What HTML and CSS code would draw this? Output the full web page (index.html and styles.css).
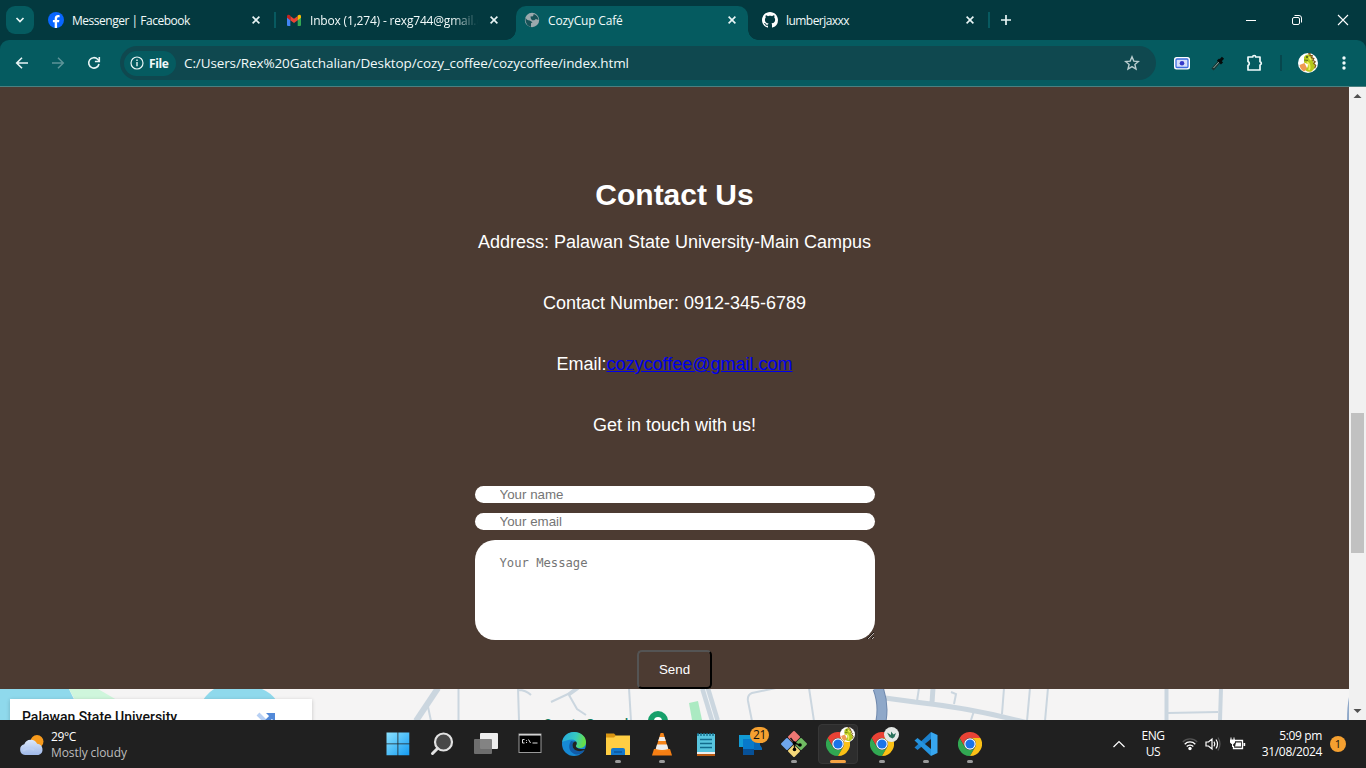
FILE: index.html
```html
<!DOCTYPE html>
<html lang="en">
<head>
<meta charset="utf-8">
<title>CozyCup Café</title>
<link rel="stylesheet" href="styles.css">
</head>
<body>
<svg class="defs" width="0" height="0" aria-hidden="true">
  <symbol id="close" viewBox="0 0 16 16"><path d="M4.600 4.600l6.800 6.800M11.400 4.600l-6.800 6.800" fill="none" stroke="#e8f5f5" stroke-width="1.600"/></symbol>
  <symbol id="chrome" viewBox="0 0 24 24">
    <path d="M1.6 6L6.8 15A6 6 0 0 1 12 6H22.4A12 12 0 0 0 1.6 6Z" fill="#e94235"/>
    <path d="M1.6 6A12 12 0 0 0 12 24L17.2 15A6 6 0 0 1 6.8 15Z" fill="#31a852"/>
    <path d="M22.4 6H12A6 6 0 0 1 17.2 15L12 24A12 12 0 0 0 22.4 6Z" fill="#fbc116"/>
    <circle cx="12" cy="12" r="5.8" fill="#fff"/><circle cx="12" cy="12" r="4.6" fill="#1a73e8"/>
  </symbol>
  <symbol id="dragon" viewBox="0 0 20 20">
    <circle cx="10" cy="10" r="10" fill="#fff"/>
    <path d="M1.5 12l5-2 3 6-3.5 2.6A9 9 0 0 1 1.500 12Z" fill="#ef9a52"/>
    <path d="M6 4q2.500-3.500 6-2l2 2.500 1 4 2 3-.5 4-3 3q-4 .8-6-1.300 3-3 2.500-6l-4-1.700Z" fill="#b5c81a"/>
    <path d="M9 9q4 3 2 8M11 4l2 3" stroke="#efee5c" stroke-width="1.800" fill="none"/>
    <path d="M10 1l2-.6v2l2.300.4-.8 1.800 2.300 1-1 1.700 2.400 1.500-1.500 1.500 2 2-1 3" fill="none" stroke="#7d5714" stroke-width="1.200"/>
    <circle cx="9" cy="4" r="1" fill="#40531b"/><path d="M6 7l4 .5" stroke="#6d7418"/>
  </symbol>
</svg>

<header class="tabstrip">
  <button class="tab-search"><svg width="12" height="12" viewBox="0 0 12 12"><path d="M2.500 4l3.500 3.500L9.500 4" fill="none" stroke="#e8f5f5" stroke-width="1.700"/></svg></button>
  <div class="tab">
    <svg width="16" height="16" viewBox="0 0 16 16"><circle cx="8" cy="8" r="8" fill="#0866ff"/><path d="M6.700 16V10.300H4.900V7.900h1.800V6.700c0-2.500 1.100-3.700 3.500-3.700.5 0 1 .1 1.400.2v2.100h-1c-1.100 0-1.500.5-1.500 1.600v1h2.300l-.4 2.400H9.100V16Z" fill="#fff"/></svg>
    <span class="tab-title t1">Messenger | Facebook</span>
    <svg class="x" width="16" height="16"><use href="#close"/></svg><i class="sep"></i>
  </div>
  <div class="tab">
    <svg width="16" height="16" viewBox="0 0 16 16"><path d="M1 4.500l3.300 2.400V14H2a1 1 0 0 1-1-1Z" fill="#4285f4"/><path d="M15 4.500l-3.300 2.400V14H14a1 1 0 0 0 1-1Z" fill="#34a853"/><path d="M4.300 4L8 6.800 11.700 4v4.200L8 11 4.300 8.200Z" fill="#ea4335"/><path d="M1 4.300C1 2.500 2.700 2 4.300 3.600v4.700L1 5.800Z" fill="#c5221f"/><path d="M15 4.300c0-1.800-1.700-2.300-3.300-.7v4.700L15 5.800Z" fill="#fbbc04"/></svg>
    <span class="tab-title t2 fade">Inbox (1,274) - rexg744@gmail.com</span>
    <svg class="x" width="16" height="16"><use href="#close"/></svg>
  </div>
  <div class="tab active">
    <svg width="16" height="16" viewBox="0 0 16 16"><circle cx="8" cy="8" r="7.200" fill="#9ba9ad"/><path d="M1.500 6Q3 8.800 5.800 8.400L8.500 10.200 7 11.300v3.600Q1.800 13.500 1.500 8ZM6.500 4.600L9 4.200l.8-2.300Q14 3.500 14.500 8l-2.600-1-1.600 1.200L8 8.300 6.800 6.500Z" fill="#175257"/></svg>
    <span class="tab-title t3">CozyCup Café</span>
    <svg class="x" width="16" height="16"><use href="#close"/></svg>
  </div>
  <div class="tab">
    <svg width="16" height="16" viewBox="0 0 16 16"><path fill="#fff" d="M8 0C3.580 0 0 3.580 0 8c0 3.540 2.290 6.530 5.470 7.590.4.070.55-.17.55-.38 0-.19-.01-.82-.01-1.490-2.010.37-2.530-.49-2.690-.94-.09-.23-.48-.94-.82-1.130-.28-.15-.68-.52-.01-.53.63-.01 1.080.58 1.230.82.72 1.210 1.870.87 2.330.66.070-.52.28-.87.51-1.070-1.780-.2-3.640-.89-3.640-3.950 0-.87.31-1.590.82-2.150-.08-.2-.36-1.020.08-2.120 0 0 .67-.21 2.200.82.64-.18 1.320-.27 2-.27s1.360.09 2 .27c1.530-1.040 2.200-.82 2.200-.82.44 1.100.16 1.920.08 2.120.51.56.82 1.270.82 2.150 0 3.070-1.870 3.750-3.650 3.950.29.25.54.73.54 1.480 0 1.070-.01 1.930-.01 2.200 0 .21.15.46.55.38A8.010 8.010 0 0 0 16 8c0-4.420-3.580-8-8-8Z"/></svg>
    <span class="tab-title t4">lumberjaxxx</span>
    <svg class="x" width="16" height="16"><use href="#close"/></svg><i class="sep"></i>
  </div>
  <svg class="newtab" width="14" height="14" viewBox="0 0 14 14"><path d="M7 2v10M2 7h10" stroke="#e8f5f5" stroke-width="1.700"/></svg>
  <div class="winctl">
    <svg width="46" height="40" viewBox="0 0 46 40"><path d="M18 20.500h10" stroke="#fff"/></svg>
    <svg width="46" height="40" viewBox="0 0 46 40"><rect x="18.500" y="17.500" width="7" height="7" rx="1.500" fill="none" stroke="#fff"/><path d="M20.500 15.500h4.500q2.500 0 2.500 2.500v4.500" fill="none" stroke="#fff"/></svg>
    <svg width="46" height="40" viewBox="0 0 46 40"><path d="M18 15l10 10M28 15l-10 10" stroke="#fff" stroke-width="1.100"/></svg>
  </div>
</header>

<div class="toolbar-back"><div class="toolbar">
  <div class="nav">
    <svg width="16" height="16" viewBox="0 0 16 16"><path d="M14 8H3M8 2.700L2.700 8 8 13.300" fill="none" stroke="#e8f5f5" stroke-width="1.600"/></svg>
    <svg width="16" height="16" viewBox="0 0 16 16"><path d="M2 8h11M8 2.700L13.300 8 8 13.300" fill="none" stroke="#5d9498" stroke-width="1.500"/></svg>
    <svg width="16" height="16" viewBox="0 0 16 16"><path d="M13 9A5.200 5.200 0 1 1 11.700 4.300L13.300 6" fill="none" stroke="#e8f5f5" stroke-width="1.600"/><path d="M13.300 2v4.500H8.900" fill="none" stroke="#e8f5f5" stroke-width="1.600"/></svg>
  </div>
  <div class="omnibox">
    <span class="chip"><svg width="14" height="14" viewBox="0 0 14 14"><circle cx="7" cy="7" r="6" fill="none" stroke="#e8f5f5" stroke-width="1.200"/><path d="M7 6v4.200M7 3.500v1.400" stroke="#e8f5f5" stroke-width="1.400"/></svg><b>File</b></span>
    <span class="url">C:/Users/Rex%20Gatchalian/Desktop/cozy_coffee/cozycoffee/index.html</span>
    <svg class="star" width="16" height="16" viewBox="0 0 16 16"><path d="M8 1.800l1.800 4.300 4.600.4-3.500 3 1.100 4.600-4-2.500-4 2.500 1.100-4.600-3.500-3 4.600-.4Z" fill="none" stroke="#b9cdcf" stroke-width="1.400"/></svg>
  </div>
  <div class="ext">
    <svg width="18" height="18" viewBox="0 0 18 18"><rect x="1" y="3" width="16" height="12.500" rx="2.500" fill="#fff"/><rect x="3" y="5" width="12" height="8.500" rx="1" fill="#d5defb" stroke="#3e6de0" stroke-width="1.300"/><circle cx="9" cy="9.200" r="2.300" fill="#3438c8"/></svg>
    <svg width="16" height="18" viewBox="0 0 16 18"><path d="M2.500 15.500L9 8" stroke="#1a3632" stroke-width="3"/><path d="M3.500 14L9 8" stroke="#8fa9a4" stroke-width="1"/><path d="M8 5.500l4 4M9.500 7.500L13 3.800" stroke="#050b0b" stroke-width="3"/></svg>
    <svg class="puzzle" width="18" height="18" viewBox="0 0 18 18"><path d="M2 3h4.700a1.500 1.500 0 0 1 3 0H14v4.700a1.700 1.700 0 0 1 0 3.300V16H2v-4.500a2.200 2.200 0 0 0 0-4Z" fill="none" stroke="#f0fbfb" stroke-width="1.700" stroke-linejoin="round"/></svg>
    <i class="bar"></i>
    <svg class="avatar" width="20" height="20"><use href="#dragon"/></svg>
    <svg class="dots" width="6" height="18" viewBox="0 0 6 18"><circle cx="3" cy="4" r="1.700" fill="#f0fbfb"/><circle cx="3" cy="9" r="1.700" fill="#f0fbfb"/><circle cx="3" cy="14" r="1.700" fill="#f0fbfb"/></svg>
  </div>
</div></div>

<div class="viewport">
  <main class="page">
    <section class="contact">
      <h1>Contact Us</h1>
      <p>Address: Palawan State University-Main Campus</p>
      <p>Contact Number: 0912-345-6789</p>
      <p>Email:<a href="mailto:cozycoffee@gmail.com">cozycoffee@gmail.com</a></p>
      <p>Get in touch with us!</p>
      <form class="form">
        <input type="text" placeholder="Your name">
        <input type="email" placeholder="Your email">
        <textarea placeholder="Your Message"></textarea>
        <button type="button" class="send">Send</button>
      </form>
    </section>
    <section class="map">
      <svg width="1349" height="31" viewBox="0 689 1349 31">
        <path d="M0 689H69L84 720H0Z" fill="#8fd9ec"/><path d="M69 689H98L117 700H75Z" fill="#cff6dc"/>
        <path d="M200 705Q206 694 214 689H262Q270 692 277 701V705Z" fill="#8fd9ec"/>
        <g fill="none" stroke="#cbd6df" stroke-width="2">
          <path d="M438 688L416 721" stroke-width="6"/><path d="M427 702l4 19M458.500 688v32M518 688l1 32M518 690q8 0 13 5M551 702l17-8M569 695l8 14 9 6M629 688l2 33"/>
          <path d="M568 695l11-8" stroke-width="4"/>
          <path d="M705 688l10 33" stroke-width="10"/><path d="M705 688l10 33" stroke="#f0f3f5" stroke-width="1"/>
          <path d="M752 721l-4-20q-1-6 4-8l24-5M809 688l5 33M919 688l-2 13M951 692l5 2-2 10M1004 688l-2 26M974 711l-3 9M1030 688l-3 33M1048 688l-3 33M1168 713l50-1"/>
          <path d="M933 688l-1 15M885 698l30 4q55 6 105 19l20 5" stroke-width="5"/>
          <path d="M1166.500 688v32M1221 688l-1 32" stroke-width="4"/>
          <path d="M878 688q6 16 3 33" stroke="#7089ad" stroke-width="11"/><path d="M878 688q6 16 3 33" stroke="#8fa8c9" stroke-width="9"/>
          <path d="M1350 697q-2 10-2 23" stroke="#8fa8c9"/>
        </g>
        <path d="M689 703l9-2 4 19h-10Z" fill="#abeac2"/>
        <circle cx="658" cy="721" r="10" fill="#17a06b"/><circle cx="658" cy="721" r="4" fill="#fff"/>
      </svg>
      <span class="poi">Sports Ground</span>
      <div class="mapcard"><span>Palawan State University</span><svg width="20" height="10" viewBox="0 0 20 10"><path d="M2 2l7 7" stroke="#b7d0f4" stroke-width="4"/><path d="M8 12l7-7" stroke="#5289d8" stroke-width="4"/><path d="M10 1h9v9Z" fill="#5289d8"/></svg></div>
    </section>
  </main>
  <aside class="scroll">
    <svg width="17" height="17" viewBox="0 0 17 17"><path d="M4.500 11h8L8.500 7Z" fill="#505050"/></svg>
    <div class="thumb"></div>
    <svg width="17" height="17" viewBox="0 0 17 17"><path d="M4.500 6h8l-4 4Z" fill="#505050"/></svg>
  </aside>
</div>

<footer class="taskbar">
  <div class="weather">
    <svg width="26" height="24" viewBox="0 0 26 24"><defs><linearGradient id="cl" x2="0" y2="1"><stop stop-color="#dbe8fb"/><stop offset="1" stop-color="#9fb8e8"/></linearGradient></defs><circle cx="18" cy="7.500" r="6.500" fill="#f79a1c"/><path d="M6 21a5.500 5.500 0 0 1-.7-10.800 7 7 0 0 1 12.800-.5 5.800 5.800 0 0 1 1.400 11.300Z" fill="url(#cl)"/><path d="M4 17q6-5 11-1" stroke="#bccff2" stroke-width="2" fill="none"/></svg>
    <div><div class="temp">29°C</div><div class="cond">Mostly cloudy</div></div>
  </div>
  <div class="apps">
    <div class="app"><svg width="24" height="24" viewBox="0 0 24 24"><defs><linearGradient id="win" x2="1" y2="1"><stop stop-color="#8be2ff"/><stop offset="1" stop-color="#149bf1"/></linearGradient></defs><path d="M.5.500h11v11H.5zM12.300.500h11v11h-11zM.5 12.300h11v11H.5zM12.300 12.300h11v11h-11z" fill="url(#win)"/></svg></div>
    <div class="app"><svg width="24" height="24" viewBox="0 0 24 24"><circle cx="13.500" cy="10" r="8.500" fill="#484848" stroke="#e2e2e2" stroke-width="2.200"/><path d="M7.500 16.500l-5 5" stroke="#e2e2e2" stroke-width="3" stroke-linecap="round"/></svg></div>
    <div class="app"><svg width="26" height="24" viewBox="0 0 26 24"><rect x="7" y="1" width="18" height="16" rx="1" fill="#eee"/><rect x="1" y="7" width="18" height="15" rx="1" fill="#777" opacity=".9"/></svg></div>
    <div class="app"><svg width="24" height="24" viewBox="0 0 24 24"><rect x="1" y="2" width="22" height="18.500" fill="#000" stroke="#9a9a9a"/><path d="M1 2.800h22" stroke="#d8d8d8" stroke-width="1.500"/><path d="M6.500 7.500h-2v3.500h2M8.500 8v.8M8.500 10v1M10.500 7.500l2 3.500M14.500 11h5" stroke="#ddd" fill="none"/></svg></div>
    <div class="app"><svg width="24" height="24" viewBox="0 0 24 24"><defs><linearGradient id="ed" x2="1" y2=".2"><stop stop-color="#25a8df"/><stop offset=".6" stop-color="#36c9c0"/><stop offset="1" stop-color="#66df49"/></linearGradient></defs><circle cx="12" cy="12" r="12" fill="#1689d4"/><path d="M.2 10C1 4 6 0 12 0c7 0 12 4.500 12 10 0 4-3 6-6.500 6-2.500 0-4.500-1-3.500-2.500 1-1.700 1-6-4-6C6 7.500 2 9 .2 10Z" fill="url(#ed)"/><path d="M9 9c-4 6-1 12 5 13.500 4 .6 7-2 8.500-4.500-5 2.500-12 1-12-5 0-2 .8-3 1.500-3.500Z" fill="#125ba8"/><path d="M14 13.500c1-1.200 1-2.500.3-3.700C12 8.500 10.500 11 10.500 13c0 6 7 7.500 12 5l1.500-1.500C19 18 13 16 14 13.500Z" fill="#222"/></svg></div>
    <div class="app run"><svg width="24" height="24" viewBox="0 0 24 24"><path d="M0 1.500h8l2 2v3H0Z" fill="#d99512"/><path d="M0 5.500h8l2-2h14V23H0Z" fill="#ffce43"/><path d="M5 23v-5q0-2 2-2h10q2 0 2 2v5Z" fill="#1478cb"/><path d="M8 20h8" stroke="#0d569b" stroke-width="1.500"/></svg></div>
    <div class="app run"><svg width="22" height="24" viewBox="0 0 22 24"><path d="M3 17h16l2 6.500H1Z" fill="#f57e13"/><path d="M9.600 1h2.800l5.100 17q-6.500 4-13 0Z" fill="#f68418"/><path d="M8.500 5h5l1.300 4H7.200ZM6 12.500h10l1.300 4.500q-6.300 2-12.600 0Z" fill="#eee"/></svg></div>
    <div class="app"><svg width="20" height="26" viewBox="0 0 20 26"><rect x="1" y="3" width="18" height="19" fill="#58c5df"/><path d="M2 2v3M5 2v3M8 2v3M11 2v3M14 2v3M17 2v3" stroke="#167391" stroke-width="1.500"/><path d="M4 8.500h12M4 12.500h12M4 16.500h12" stroke="#126b8d" stroke-width="1.500"/><rect x="1" y="21" width="18" height="2" fill="#eee"/><rect x="1" y="23" width="18" height="2" fill="#bb5b13"/></svg></div>
    <div class="app"><svg width="24" height="24" viewBox="0 0 24 24"><path d="M12 5h10v8l2 3v2h-9Z" fill="#0767b7"/><path d="M1 3h12v12H1z" fill="#129bd5"/><path d="M5 7h11v15H5z" fill="#0879ca"/><path d="M5 17h11v6H5Z" fill="#075198"/></svg><span class="count">21</span></div>
    <div class="app run"><svg width="26" height="26" viewBox="0 0 26 26"><rect x="8.500" y="1.500" width="9" height="9" rx="1" transform="rotate(45 13 6)" fill="#ee7774"/><rect x="1.500" y="8.500" width="9" height="9" rx="1" transform="rotate(45 6 13)" fill="#6ea6ed"/><rect x="15.500" y="8.500" width="9" height="9" rx="1" transform="rotate(45 20 13)" fill="#70bb62"/><rect x="8.500" y="15.500" width="9" height="9" rx="1" transform="rotate(45 13 20)" fill="#f5d879"/><path d="M9.500 7l4 5v7M14 12l5 2.500" stroke="#171717" stroke-width="1.500" fill="none"/><circle cx="13.500" cy="12" r="1.800"/><circle cx="13.500" cy="18.500" r="1.800"/><circle cx="19" cy="14" r="1.800"/></svg></div>
    <div class="app run current"><svg width="24" height="24"><use href="#chrome"/></svg><svg class="mini" width="15" height="15" viewBox="0 0 15 15"><use href="#dragon" width="15" height="15"/></svg></div>
    <div class="app run"><svg width="24" height="24"><use href="#chrome"/></svg><svg class="mini" width="15" height="15" viewBox="0 0 15 15"><circle cx="7.500" cy="7.500" r="7.500" fill="#e4e8e6"/><path d="M3 5.500l4 2.500V4.500l2.500 3L12 6l-1.500 4-2 1.500-3-1.500Z" fill="#28715b"/></svg></div>
    <div class="app run"><svg width="24" height="24" viewBox="0 0 24 24"><path d="M17 0L23.500 3v18L17 24Z" fill="#37a6ef"/><path d="M17 0v7L3.500 18 .5 15.500Z" fill="#1b80cc"/><path d="M17 24v-7L3.500 6 .5 8.500Z" fill="#2594df"/></svg></div>
    <div class="app run"><svg width="24" height="24"><use href="#chrome"/></svg></div>
  </div>
  <div class="tray">
    <svg class="chev" width="14" height="10" viewBox="0 0 14 10"><path d="M1.500 8L7 2.500 12.500 8" fill="none" stroke="#fff" stroke-width="1.200"/></svg>
    <div class="lang">ENG<br>US</div>
    <div class="status">
      <svg width="16" height="16" viewBox="0 0 16 16"><g fill="none" stroke="#fff" stroke-width="1.300"><path d="M.8 6a10 10 0 0 1 14.400 0" stroke="#555"/><path d="M2.700 8.200a7.400 7.400 0 0 1 10.600 0M4.700 10.500a4.600 4.600 0 0 1 6.600 0"/></g><circle cx="8" cy="12.500" r="1.700" fill="#fff"/></svg>
      <svg width="17" height="16" viewBox="0 0 17 16"><g fill="none" stroke="#fff" stroke-width="1.200"><path d="M1 6h2.500l3.500-3v10l-3.500-3H1ZM9 5.700q1.500 2.300 0 4.600M11 3.500q3 4.500 0 9"/><path d="M13 1.500q4 6.500 0 13" stroke="#555"/></g></svg>
      <svg width="17" height="14" viewBox="0 0 17 14"><path d="M5 3.500h8.500v8h-9V9" fill="none" stroke="#fff" stroke-width="1.300"/><path d="M7 5.500h5v4H6Z" fill="#fff"/><path d="M14.500 6h1.700v3h-1.700zM1 2.500h5v3L4.500 7h-2L1 5.500ZM1.500.5h1v2h-1zM4.500.5h1v2h-1zM3 7h1.200v3H3z" fill="#fff"/></svg>
    </div>
    <div class="clock">5:09 pm<br>31/08/2024</div>
    <span class="notif">1</span>
  </div>
</footer>
</body>
</html>
```
FILE: styles.css
```css
* { box-sizing: border-box; }
body { margin: 0; width: 1366px; height: 768px; overflow: hidden; display: flex; flex-direction: column; font-family: "Open Sans", "Noto Sans", sans-serif; font-size: 12px; }
.defs { position: absolute; }
svg { display: block; flex: none; }

.tabstrip { height: 40px; background: #03393f; display: flex; align-items: center; padding-left: 6px; }
.tab-search { width: 28px; height: 28px; border: 0; padding: 0; border-radius: 9px; background: #055b60; display: flex; align-items: center; justify-content: center; margin-right: 6px; }
.tab { position: relative; width: 238px; height: 34px; margin-top: 6px; padding: 0 14px 6px 8px; display: flex; align-items: center; gap: 8px; color: #f2fafa; }
.tab > svg, .tab-title { position: relative; z-index: 1; }
.tab-title { flex: 1; white-space: nowrap; overflow: hidden; line-height: 18px; padding-top: 1px; }
.fade { -webkit-mask-image: linear-gradient(90deg, #000 142px, transparent 168px); }
.t1 { letter-spacing: -.48px; }
.t2, .t3 { letter-spacing: -.18px; }
.t4 { letter-spacing: -.55px; }
.sep { position: absolute; left: 234px; top: 6px; width: 2px; height: 16px; background: #075a60; }
.tab.active::before { content: ""; position: absolute; inset: 0 6px 0 0; border-radius: 10px 10px 0 0; background: #055b60; }
.tab.active::after { content: ""; position: absolute; left: -10px; right: -4px; bottom: 0; height: 10px; background: radial-gradient(circle at 0 0, transparent 9.500px, #055b60 10px) left / 10px 10px no-repeat, radial-gradient(circle at 100% 0, transparent 9.500px, #055b60 10px) right / 10px 10px no-repeat; }
.newtab { margin-left: 7px; }
.winctl { display: flex; margin-left: auto; }

.toolbar-back { background: #03393f; }
.toolbar { height: 47px; background: #055b60; border-radius: 9px 9px 0 0; border-bottom: 1px solid #4a8080; display: flex; align-items: center; padding: 0 19px 0 14px; }
.nav { display: flex; gap: 20px; }
.omnibox { margin-left: 18px; width: 1036px; height: 34px; border-radius: 17px; background: #0f484f; display: flex; align-items: center; padding: 0 16px 0 4px; color: #f2fafa; }
.chip { height: 25px; width: 52px; border-radius: 13px; background: #055b60; display: flex; align-items: center; gap: 5px; padding-left: 6px; letter-spacing: -.4px; }
.url { flex: 1; font-size: 13.500px; margin-left: 8px; letter-spacing: -.11px; white-space: nowrap; }
.ext { display: flex; align-items: center; margin-left: 17px; gap: 19px; }
.puzzle { margin-left: 1px; }
.bar { width: 2px; height: 16px; background: #07474d; margin-left: -3px; }
.avatar { margin-left: -3px; }
.dots { margin-left: 4px; }

.viewport { height: 633px; display: flex; }
.page { width: 1349px; display: flex; flex-direction: column; font-family: "Liberation Sans", Arial, sans-serif; }
.contact { height: 602px; background: #4c3b32; color: #fff; text-align: center; padding-top: 91px; }
.contact h1 { margin: 0; font-size: 30px; line-height: 34px; }
.contact p { margin: 0; font-size: 18px; line-height: 61px; }
.contact a { color: #00e; }
.form { width: 400px; margin: 30px auto 0; display: flex; flex-direction: column; align-items: center; gap: 10px; }
.form input, .form textarea { width: 400px; border: 0; margin: 0; background: #fff; }
.form input { height: 17px; padding: 0 25px; border-radius: 10px; font: 13.333px "Liberation Sans", Arial, sans-serif; }
.form textarea { height: 100px; padding: 15px 25px; border-radius: 20px; font: 12.200px/16px "DejaVu Sans Mono", monospace; }
.form ::placeholder { color: #757575; }
.send { width: 75px; height: 39px; border: 2px outset #000; border-radius: 5px; background: transparent; color: #fff; font: 13.333px "Liberation Sans", Arial, sans-serif; }
.map { position: relative; height: 31px; overflow: hidden; background: #f5f4f4; }
.poi { position: absolute; left: 544px; top: 26px; color: #147d5c; font: 500 13px/18px Roboto, sans-serif; }
.mapcard { position: absolute; left: 10px; top: 10px; width: 302px; height: 40px; background: #fff; box-shadow: 0 1px 4px rgba(0,0,0,.2); display: flex; justify-content: space-between; padding: 9px 36px 0 12px; font: 500 14px/18px Roboto, sans-serif; color: #111; }
.mapcard svg { margin-top: 4px; }
.scroll { width: 17px; background: #f1f1f1; display: flex; flex-direction: column; align-items: center; }
.thumb { width: 13px; height: 140px; background: #c1c1c1; margin: 309px 0 150px; }

.taskbar { height: 48px; background: #202020; display: flex; color: #fff; }
.weather { width: 376px; display: flex; gap: 6px; padding: 14px 0 0 19px; }
.weather > div { margin-top: -5px; line-height: 16px; }
.temp { letter-spacing: -.4px; }
.cond { color: #bdbdbd; letter-spacing: -.08px; }
.apps { display: flex; }
.app { position: relative; width: 44px; height: 48px; display: flex; align-items: center; justify-content: center; }
.run::after { content: ""; position: absolute; left: 19px; bottom: 5px; width: 6px; height: 3px; border-radius: 2px; background: #9a9a9a; }
.current::before { content: ""; position: absolute; inset: 4px 2px; border: 1px solid #373737; border-radius: 4px; background: #2d2d2d; }
.current > svg { position: relative; }
.current::after { left: 14px; width: 16px; background: #f5a343; }
.app .mini { position: absolute; left: 24px; top: 7px; }
.count { position: absolute; left: 22px; top: 7px; width: 19px; height: 16px; border-radius: 8px; background: #f5a030; color: #111; text-align: center; line-height: 16px; letter-spacing: -.3px; }
.tray { flex: 1; display: flex; align-items: center; font-size: 12px; line-height: 16px; }
.chev { margin-left: 120px; }
.lang { width: 30px; margin-left: 12px; text-align: center; letter-spacing: -.4px; }
.status { display: flex; align-items: center; gap: 7px; margin-left: 14px; }
.clock { width: 76px; text-align: right; letter-spacing: -.35px; }
.notif { width: 16px; height: 16px; margin-left: 8px; border-radius: 50%; background: #f5a030; color: #111; text-align: center; font-size: 11px; }
```
